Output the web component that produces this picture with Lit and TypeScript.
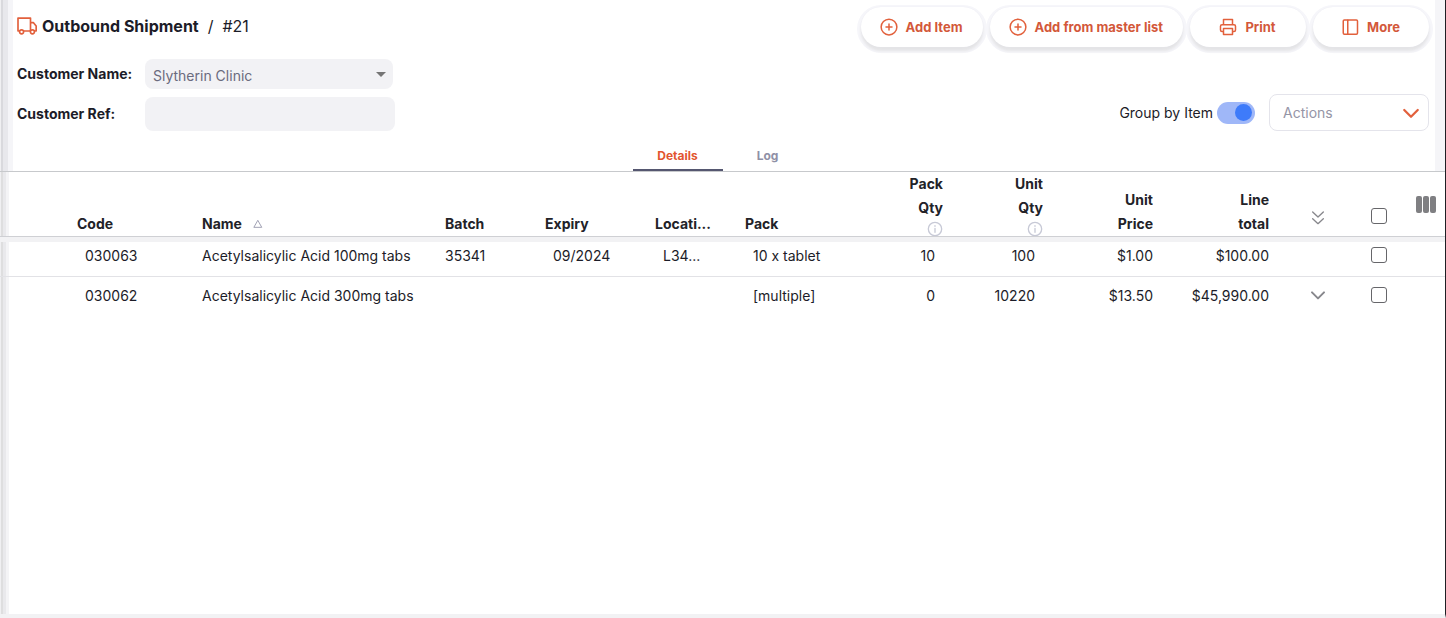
import { LitElement, html, css, svg, nothing } from "lit";
import { customElement, property, state } from "lit/decorators.js";

interface Line {
  code: string;
  name: string;
  batch: string;
  expiry: string;
  location: string;
  pack: string;
  packQty: string;
  unitQty: string;
  price: string;
  total: string;
  expandable: boolean;
}

const LINES: Line[] = [
  {
    code: "030063", name: "Acetylsalicylic Acid 100mg tabs", batch: "35341", expiry: "09/2024",
    location: "L34...", pack: "10 x tablet", packQty: "10", unitQty: "100", price: "$1.00",
    total: "$100.00", expandable: false,
  },
  {
    code: "030062", name: "Acetylsalicylic Acid 300mg tabs", batch: "", expiry: "",
    location: "", pack: "[multiple]", packQty: "0", unitQty: "10220", price: "$13.50",
    total: "$45,990.00", expandable: true,
  },
];

const ICONS: Record<string, unknown> = {
  truck: svg`<path d="M1.2 2.5h15v15.5h-15z M16.2 8h3.6l3.2 4v6h-6.8"/><circle cx="5.5" cy="19" r="2.4" fill="#fff"/><circle cx="18.5" cy="19" r="2.4" fill="#fff"/>`,
  plus: svg`<circle cx="12" cy="12" r="10.5"/><path d="M12 8v8M8 12h8"/>`,
  print: svg`<path d="M6 9V2h12v7M6 18H4a2 2 0 0 1-2-2v-5a2 2 0 0 1 2-2h16a2 2 0 0 1 2 2v5a2 2 0 0 1-2 2h-2M6 14h12v8H6z"/>`,
  panel: svg`<rect x="3" y="2.5" width="19" height="19" rx="1.5"/><path d="M9 3v18"/>`,
  down: svg`<path d="M3 8l9 9 9-9"/>`,
  double: svg`<path d="M4 3l8 7.5L20 3M4 13l8 7.5 8-7.5"/>`,
  info: svg`<circle cx="12" cy="12" r="10"/><path d="M12 11v6M12 7v1"/>`,
  sort: svg`<path d="M12 4l9 16H3z"/>`,
};

@customElement("ui-icon")
class UiIcon extends LitElement {
  @property() name = "";
  static styles = css`
    :host { display: inline-flex; width: 20px; height: 20px; flex: none; }
    svg { width: 100%; height: 100%; fill: none; stroke: currentColor; stroke-width: 2; stroke-linejoin: round; stroke-linecap: round; }
    :host(.bold) svg { stroke-width: 3; }
  `;
  render() {
    return html`<svg viewBox="0 0 24 24" aria-hidden="true">${ICONS[this.name]}</svg>`;
  }
}

@customElement("app-root")
class AppRoot extends LitElement {
  @state() tab = "Details";

  static styles = css`
    :host {
      display: block;
      font-family: Inter, "Liberation Sans", sans-serif;
      font-size: 14px;
      line-height: 24px;
      color: #1c1c28;
    }
    * { box-sizing: border-box; }
    button, input, select { font: inherit; color: inherit; margin: 0; }
    .page {
      min-height: 100vh;
      display: flex;
      flex-direction: column;
      background: #fff;
      border-right: 1px solid #1f1f24;
      border-bottom: 4px solid #f2f2f4;
      box-shadow: inset 1px 0 #f0f0f2, inset 3px 0 #dededf, inset 6px 0 #e9e9ec, inset 9px 0 #f4f4f6;
    }
    .top {
      border-bottom: 1px solid #c7c9cc;
      box-shadow: inset 1px 0 #f0f0f2, inset 3px 0 #d9d9dd, inset 8px 0 #e8e8ec, inset 13px 0 #f5f5f8, inset -10px 0 #f5f5f8;
    }
    .bar { display: flex; justify-content: space-between; padding: 7px 16px 0 17px; }
    .crumbs { display: flex; align-items: center; gap: 5px; height: 38px; font-size: 16px; margin: 0; font-weight: 400; }
    .crumbs ui-icon, .pill ui-icon, .select-box ui-icon { color: #e2603c; }
    .crumbs strong { font-weight: 700; }
    .crumbs .sep { padding: 0 4px; }
    .actions { display: flex; gap: 7px; }
    .pill {
      display: flex; align-items: center; justify-content: center; gap: 8px;
      min-width: 116px; height: 40px; padding: 0 20px 0 19px;
      border: 0; border-radius: 20px; background: #fff;
      color: #d3583a; font-size: 13px; font-weight: 700;
      box-shadow: 0 0 1px #e6e6ee, 0 4px 3px #e4e4e6, 0 2px 0 4px #f6f6fa;
    }
    .pill ui-icon { width: 18px; height: 18px; }
    .filters { display: flex; justify-content: space-between; align-items: flex-end; padding: 12px 16px 0 17px; }
    .fields { display: grid; grid-template-columns: 120px 250px; gap: 8px; align-items: center; }
    .fields label { font-weight: 700; }
    .customer { position: relative; width: 248px; height: 30px; }
    .customer select {
      appearance: none; width: 100%; height: 30px; padding: 3px 8px 0; border: 0;
      border-radius: 8px; background: #f2f2f5; color: #6b6b7e;
    }
    .customer::after {
      content: ""; position: absolute; right: 7px; top: 13px; pointer-events: none;
      border: 5px solid transparent; border-top-color: #757575; border-bottom: 0;
    }
    .ref { width: 250px; height: 34px; border: 0; border-radius: 8px; background: #f2f2f5; padding: 0 8px; }
    .view { display: flex; align-items: center; }
    .switch { display: flex; align-items: center; gap: 4px; margin-right: 14px; }
    .switch input {
      appearance: none; width: 38px; height: 22px; border-radius: 11px; background: #9fb7f8;
      display: flex; align-items: center; justify-content: flex-end; padding: 3px;
    }
    .switch input::before { content: ""; width: 17px; height: 17px; border-radius: 50%; background: #3e7bfa; }
    .switch input:not(:checked) { justify-content: flex-start; }
    .select-box { position: relative; width: 160px; height: 37px; }
    .select-box select {
      appearance: none; width: 100%; height: 37px; padding: 0 13px; background: #fff;
      border: 1px solid #e4e4eb; border-radius: 8px; color: #9595a6;
    }
    .select-box ui-icon { position: absolute; right: 9px; top: 10px; width: 18px; height: 18px; pointer-events: none; }
    .tabs { display: flex; justify-content: center; padding-top: 8px; }
    .tab {
      width: 90px; height: 32px; padding: 3px 0 0; border: 0; border-bottom: 2px solid transparent;
      background: none; color: #8f90a6; font-size: 12px; font-weight: 700;
    }
    .tab.on { color: #e2552f; border-color: #555770; }
    table { width: 100%; table-layout: fixed; border-collapse: separate; border-spacing: 0; }
    th, td { padding: 0; text-align: left; white-space: nowrap; overflow: hidden; }
    thead th { height: 65px; vertical-align: bottom; font-weight: 700; color: #222228; border-bottom: 1px solid #cfd0d4; }
    .num { text-align: right; }
    th ui-icon.info { display: block; width: 16px; height: 16px; margin-left: auto; color: #c7c9d6; }
    th ui-icon.sort { width: 10px; height: 10px; margin-left: 8px; color: #8f90a6; }
    td { height: 40px; vertical-align: top; line-height: 38px; }
    tbody tr + tr td { border-top: 1px solid #e2e2e6; }
    tbody tr:first-child td { box-shadow: inset 0 5px #f2f2f4; height: 39px; }
    .inset { padding-left: 8px; }
    .qty { padding-right: 8px; }
    .col-space { width: 77px; }
    .col-code { width: 125px; }
    .col-name { width: 243px; }
    .col-100 { width: 100px; }
    .col-110 { width: 110px; }
    .col-90 { width: 90px; }
    .col-total { width: 116px; }
    .col-expand { width: 98px; }
    .col-check { width: 24px; }
    .col-tools { width: 54px; }
    .mark { display: flex; align-items: center; justify-content: center; }
    th .mark { height: 40px; }
    th .mark.low { height: 36px; }
    td .mark { height: 36px; }
    .ghost { display: inline-flex; border: 0; padding: 0; background: none; color: #87878c; }
    .ghost ui-icon { width: 16px; height: 16px; }
    .tick {
      appearance: none; width: 16px; height: 16px; border: 1px solid #66666a;
      border-radius: 3px; background: #fff;
    }
    .tick:checked { background: #3e7bfa; }
    .cols { display: flex; gap: 1px; height: 64px; padding: 24px 9px 0 0; justify-content: flex-end; border: 0; background: none; width: 100%; }
    .cols i { width: 6px; height: 17px; border-radius: 2px; background: #7f7f82; }
  `;

  private pill(icon: string, label: string) {
    return html`<button class="pill"><ui-icon name=${icon}></ui-icon>${label}</button>`;
  }

  private row(l: Line) {
    return html`<tr>
      <td></td>
      <td class="inset">${l.code}</td>
      <td>${l.name}</td>
      <td>${l.batch}</td>
      <td class="inset">${l.expiry}</td>
      <td class="inset">${l.location}</td>
      <td class="inset">${l.pack}</td>
      <td class="num qty">${l.packQty}</td>
      <td class="num qty">${l.unitQty}</td>
      <td class="num">${l.price}</td>
      <td class="num">${l.total}</td>
      <td><div class="mark">${l.expandable
        ? html`<button class="ghost" aria-label="Expand"><ui-icon class="bold" name="down"></ui-icon></button>`
        : nothing}</div></td>
      <td><div class="mark"><input class="tick" type="checkbox" aria-label="Select ${l.code}" /></div></td>
      <td></td>
    </tr>`;
  }

  render() {
    return html`<main class="page">
      <header class="top">
        <div class="bar">
          <h1 class="crumbs"><ui-icon name="truck"></ui-icon><strong>Outbound Shipment</strong><span class="sep">/</span><span>#21</span></h1>
          <div class="actions">
            ${this.pill("plus", "Add Item")}
            ${this.pill("plus", "Add from master list")}
            ${this.pill("print", "Print")}
            ${this.pill("panel", "More")}
          </div>
        </div>
        <div class="filters">
          <div class="fields">
            <label for="customer">Customer Name:</label>
            <div class="customer"><select id="customer"><option>Slytherin Clinic</option></select></div>
            <label for="ref">Customer Ref:</label>
            <input class="ref" id="ref" type="text" />
          </div>
          <div class="view">
            <label class="switch">Group by Item<input type="checkbox" role="switch" checked /></label>
            <div class="select-box">
              <select aria-label="Actions"><option>Actions</option></select>
              <ui-icon class="bold" name="down"></ui-icon>
            </div>
          </div>
        </div>
        <nav class="tabs">
          ${["Details", "Log"].map((t) => html`<button class="tab ${t === this.tab ? "on" : ""}" @click=${() => (this.tab = t)}>${t}</button>`)}
        </nav>
      </header>
      <table>
        <colgroup>
          <col class="col-space" /><col class="col-code" /><col class="col-name" /><col class="col-100" />
          <col class="col-110" /><col class="col-90" /><col /><col class="col-90" /><col class="col-100" />
          <col class="col-110" /><col class="col-total" /><col class="col-expand" /><col class="col-check" /><col class="col-tools" />
        </colgroup>
        <thead>
          <tr>
            <th></th>
            <th>Code</th>
            <th>Name <ui-icon class="sort" name="sort"></ui-icon></th>
            <th>Batch</th>
            <th>Expiry</th>
            <th>Locati...</th>
            <th>Pack</th>
            <th class="num">Pack<br />Qty<ui-icon class="info" name="info"></ui-icon></th>
            <th class="num">Unit<br />Qty<ui-icon class="info" name="info"></ui-icon></th>
            <th class="num">Unit<br />Price</th>
            <th class="num">Line<br />total</th>
            <th><div class="mark low"><button class="ghost" aria-label="Expand all"><ui-icon name="double"></ui-icon></button></div></th>
            <th><div class="mark"><input class="tick" type="checkbox" aria-label="Select all" /></div></th>
            <th><button class="cols" aria-label="Columns"><i></i><i></i><i></i></button></th>
          </tr>
        </thead>
        <tbody>${LINES.map((l) => this.row(l))}</tbody>
      </table>
    </main>`;
  }
}
